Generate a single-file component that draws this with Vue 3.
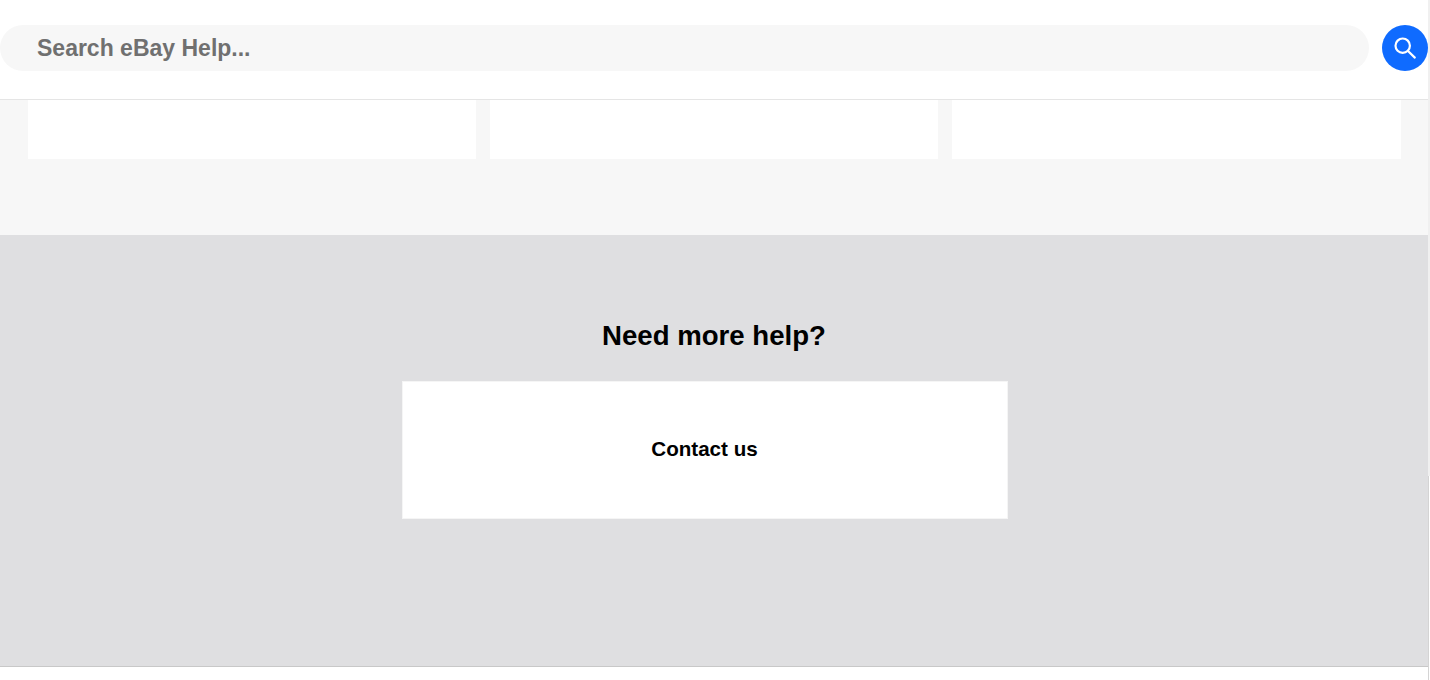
<template>
  <div class="page">
    <main class="main">
      <header class="search-bar">
        <div class="search-input">Search eBay Help...</div>
        <button class="search-btn" type="button" aria-label="Search">
          <svg width="24" height="24" viewBox="0 0 24 24" fill="none" stroke="#fff" stroke-width="2.2" stroke-linecap="round">
            <circle cx="9.7" cy="9.7" r="7.2"/>
            <path d="M15 15l6.8 6.6"/>
          </svg>
        </button>
      </header>

      <section class="topics">
        <div class="topic-card" v-for="n in 3" :key="n"></div>
      </section>

      <section class="more-help">
        <h2>Need more help?</h2>
        <div class="contact-card">Contact us</div>
      </section>

      <footer class="foot"></footer>
    </main>
    <div class="rail">
      <div class="rail-top"></div>
      <div class="rail-bottom"></div>
    </div>
  </div>
</template>

<script setup>
</script>

<style>
html, body {
  background: #fff;
  overflow: hidden;
}
</style>

<style scoped>
.page {
  display: flex;
  width: 1430px;
  height: 680px;
  overflow: hidden;
  font-family: "Liberation Sans", Arial, sans-serif;
}

.main {
  width: 1428px;
  flex-shrink: 0;
  display: flex;
  flex-direction: column;
}

.rail {
  width: 2px;
  display: flex;
  flex-direction: column;
}

.rail-top {
  height: 476px;
  background: #f0f0f0;
}

.rail-bottom {
  flex: 1;
  border-left: 1px solid #d4d4d4;
}

.search-bar {
  height: 99px;
  display: flex;
  align-items: flex-start;
  gap: 13px;
  border-bottom: 1px solid #e5e5e5;
}

.search-input {
  flex: 1;
  height: 46px;
  margin-top: 25px;
  padding-left: 37px;
  border-radius: 23px;
  background: #f7f7f7;
  color: #707070;
  font-size: 23px;
  font-weight: 700;
  line-height: 47px;
}

.search-btn {
  width: 46px;
  height: 46px;
  margin-top: 25px;
  padding: 0;
  border: 0;
  border-radius: 50%;
  background: #0f6bff;
  display: flex;
  align-items: center;
  justify-content: center;
  flex-shrink: 0;
}

.topics {
  height: 135px;
  padding-left: 28px;
  background: #f7f7f7;
  display: grid;
  grid-template-columns: 448px 448px 449px;
  column-gap: 14px;
  align-items: start;
}

.topic-card {
  height: 59px;
  background: #fff;
}

.more-help {
  height: 431px;
  box-sizing: border-box;
  padding-top: 85px;
  background: #dfdfe1;
  display: flex;
  flex-direction: column;
  align-items: center;
}

.more-help h2 {
  margin: 0 0 29px;
  font-size: 27.6px;
  line-height: 32px;
  font-weight: 700;
  color: #000;
}

.contact-card {
  width: 606px;
  height: 138px;
  box-sizing: border-box;
  margin-right: 19px;
  background: #fff;
  border: 1px solid #f5f5f5;
  color: #000;
  font-size: 20.6px;
  font-weight: 700;
  line-height: 134px;
  text-align: center;
}

.foot {
  flex: 1;
  background: #fff;
  border-top: 1px solid #c8c8c8;
}
</style>
